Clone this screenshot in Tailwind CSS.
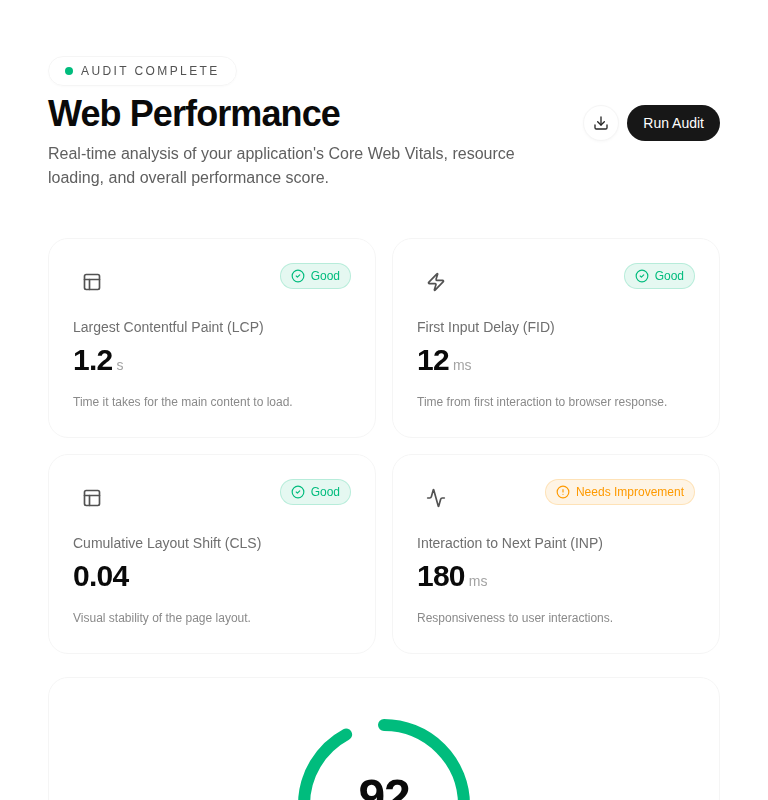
<!DOCTYPE html>
<html lang="en">
<head>
  <meta charset="UTF-8">
  <title>Web Performance</title>
  <script src="https://cdn.jsdelivr.net/npm/@tailwindcss/browser@4"></script>
</head>
<body class="bg-white h-[800px] overflow-hidden font-['Liberation_Sans',Arial,sans-serif]">
  <div class="px-12 pt-14">
    <!-- Header -->
    <span class="inline-flex items-center gap-2 h-[30px] px-4 rounded-full border border-neutral-100 text-xs tracking-[0.2em] text-[#525252] shadow-[0_1px_2px_rgba(0,0,0,0.02)] will-change-transform">
      <span class="w-2 h-2 rounded-full bg-emerald-500"></span>AUDIT COMPLETE
    </span>
    <div class="flex justify-between items-start mt-[5px]">
      <div>
        <h1 class="text-4xl leading-[46px] font-bold tracking-[-0.025em] text-[#0a0a0a]">Web Performance</h1>
        <p class="mt-[5px] w-[500px] text-base leading-6 text-[#5f5f5f] will-change-transform">Real-time analysis of your application's Core Web Vitals, resource loading, and overall performance score.</p>
      </div>
      <div class="flex items-center gap-2 mt-3.5">
        <button class="w-9 h-9 flex items-center justify-center rounded-full bg-white border border-neutral-100 shadow-[0_1px_3px_rgba(0,0,0,0.03)] text-[#262626]">
          <svg class="w-4 h-4" viewBox="0 0 24 24" fill="none" stroke="currentColor" stroke-width="2" stroke-linecap="round" stroke-linejoin="round"><path d="M21 15v4a2 2 0 0 1-2 2H5a2 2 0 0 1-2-2v-4"/><path d="M7 10l5 5 5-5"/><path d="M12 15V3"/></svg>
        </button>
        <button class="h-9 px-4 rounded-full bg-[#171717] text-white text-sm">Run Audit</button>
      </div>
    </div>

    <!-- Metric cards -->
    <div class="grid grid-cols-2 gap-4 mt-12">
      <div class="h-[199.5px] p-6 rounded-[20px] border border-neutral-100 bg-white will-change-transform">
        <div class="flex justify-between items-start">
          <span class="w-[38px] h-[38px] flex items-center justify-center text-[#525252]">
            <svg class="w-5 h-5" viewBox="0 0 24 24" fill="none" stroke="currentColor" stroke-width="2" stroke-linecap="round" stroke-linejoin="round"><rect x="3" y="3" width="18" height="18" rx="2"/><path d="M3 9h18"/><path d="M9 21V9"/></svg>
          </span>
          <span class="inline-flex items-center gap-1.5 h-[26px] px-2.5 rounded-full border border-emerald-500/20 bg-emerald-500/10 text-xs text-emerald-500">
            <svg class="w-3.5 h-3.5" viewBox="0 0 24 24" fill="none" stroke="currentColor" stroke-width="2" stroke-linecap="round" stroke-linejoin="round"><circle cx="12" cy="12" r="10"/><path d="M9 12l2 2 4-4"/></svg>Good
          </span>
        </div>
        <p class="mt-4 text-sm leading-5 text-[#6f6f6f]">Largest Contentful Paint (LCP)</p>
        <div class="flex items-baseline gap-1 mt-[5px]">
          <span class="text-[30px] leading-9 font-bold tracking-[-0.025em] text-[#0a0a0a]">1.2</span>
          <span class="text-sm text-[#a3a3a3]">s</span>
        </div>
        <p class="mt-4 text-xs leading-4 text-[#8a8a8a]">Time it takes for the main content to load.</p>
      </div>

      <div class="h-[199.5px] p-6 rounded-[20px] border border-neutral-100 bg-white will-change-transform">
        <div class="flex justify-between items-start">
          <span class="w-[38px] h-[38px] flex items-center justify-center text-[#525252]">
            <svg class="w-5 h-5" viewBox="0 0 24 24" fill="none" stroke="currentColor" stroke-width="2" stroke-linecap="round" stroke-linejoin="round"><path d="M4 14a1 1 0 0 1-.78-1.63l9.9-10.2a.5.5 0 0 1 .86.46l-1.92 6.02A1 1 0 0 0 13 10h7a1 1 0 0 1 .78 1.63l-9.9 10.2a.5.5 0 0 1-.86-.46l1.92-6.02A1 1 0 0 0 11 14z"/></svg>
          </span>
          <span class="inline-flex items-center gap-1.5 h-[26px] px-2.5 rounded-full border border-emerald-500/20 bg-emerald-500/10 text-xs text-emerald-500">
            <svg class="w-3.5 h-3.5" viewBox="0 0 24 24" fill="none" stroke="currentColor" stroke-width="2" stroke-linecap="round" stroke-linejoin="round"><circle cx="12" cy="12" r="10"/><path d="M9 12l2 2 4-4"/></svg>Good
          </span>
        </div>
        <p class="mt-4 text-sm leading-5 text-[#6f6f6f]">First Input Delay (FID)</p>
        <div class="flex items-baseline gap-1 mt-[5px]">
          <span class="text-[30px] leading-9 font-bold tracking-[-0.025em] text-[#0a0a0a]">12</span>
          <span class="text-sm text-[#a3a3a3]">ms</span>
        </div>
        <p class="mt-4 text-xs leading-4 text-[#8a8a8a]">Time from first interaction to browser response.</p>
      </div>

      <div class="h-[199.5px] p-6 rounded-[20px] border border-neutral-100 bg-white will-change-transform">
        <div class="flex justify-between items-start">
          <span class="w-[38px] h-[38px] flex items-center justify-center text-[#525252]">
            <svg class="w-5 h-5" viewBox="0 0 24 24" fill="none" stroke="currentColor" stroke-width="2" stroke-linecap="round" stroke-linejoin="round"><rect x="3" y="3" width="18" height="18" rx="2"/><path d="M3 9h18"/><path d="M9 21V9"/></svg>
          </span>
          <span class="inline-flex items-center gap-1.5 h-[26px] px-2.5 rounded-full border border-emerald-500/20 bg-emerald-500/10 text-xs text-emerald-500">
            <svg class="w-3.5 h-3.5" viewBox="0 0 24 24" fill="none" stroke="currentColor" stroke-width="2" stroke-linecap="round" stroke-linejoin="round"><circle cx="12" cy="12" r="10"/><path d="M9 12l2 2 4-4"/></svg>Good
          </span>
        </div>
        <p class="mt-4 text-sm leading-5 text-[#6f6f6f]">Cumulative Layout Shift (CLS)</p>
        <div class="flex items-baseline gap-1 mt-[5px]">
          <span class="text-[30px] leading-9 font-bold tracking-[-0.025em] text-[#0a0a0a]">0.04</span>
        </div>
        <p class="mt-4 text-xs leading-4 text-[#8a8a8a]">Visual stability of the page layout.</p>
      </div>

      <div class="h-[199.5px] p-6 rounded-[20px] border border-neutral-100 bg-white will-change-transform">
        <div class="flex justify-between items-start">
          <span class="w-[38px] h-[38px] flex items-center justify-center text-[#525252]">
            <svg class="w-5 h-5" viewBox="0 0 24 24" fill="none" stroke="currentColor" stroke-width="2" stroke-linecap="round" stroke-linejoin="round"><path d="M22 12h-2.48a2 2 0 0 0-1.93 1.46l-2.35 8.36a.25.25 0 0 1-.48 0L9.24 2.18a.25.25 0 0 0-.48 0l-2.35 8.36A2 2 0 0 1 4.49 12H2"/></svg>
          </span>
          <span class="inline-flex items-center gap-1.5 h-[26px] px-2.5 rounded-full border border-amber-500/20 bg-amber-500/10 text-xs text-amber-500">
            <svg class="w-3.5 h-3.5" viewBox="0 0 24 24" fill="none" stroke="currentColor" stroke-width="2" stroke-linecap="round" stroke-linejoin="round"><circle cx="12" cy="12" r="10"/><path d="M12 8v4"/><path d="M12 16h.01"/></svg>Needs Improvement
          </span>
        </div>
        <p class="mt-4 text-sm leading-5 text-[#6f6f6f]">Interaction to Next Paint (INP)</p>
        <div class="flex items-baseline gap-1 mt-[5px]">
          <span class="text-[30px] leading-9 font-bold tracking-[-0.025em] text-[#0a0a0a]">180</span>
          <span class="text-sm text-[#a3a3a3]">ms</span>
        </div>
        <p class="mt-4 text-xs leading-4 text-[#8a8a8a]">Responsiveness to user interactions.</p>
      </div>
    </div>

    <!-- Overall score -->
    <div class="mt-6 pt-[37px] h-[300px] rounded-[20px] border border-neutral-100 bg-white flex justify-center will-change-transform">
      <div class="relative w-[180px] h-[180px]">
        <svg class="w-full h-full -rotate-90 text-emerald-500" viewBox="0 0 180 180" fill="none">
          <circle cx="90" cy="90" r="80" stroke="currentColor" stroke-width="12" stroke-linecap="round" stroke-dasharray="462.4 502.7"/>
        </svg>
        <div class="absolute inset-0 pb-4 flex items-center justify-center text-5xl font-bold tracking-[-0.025em] text-[#0a0a0a]">92</div>
      </div>
    </div>
  </div>
</body>
</html>
